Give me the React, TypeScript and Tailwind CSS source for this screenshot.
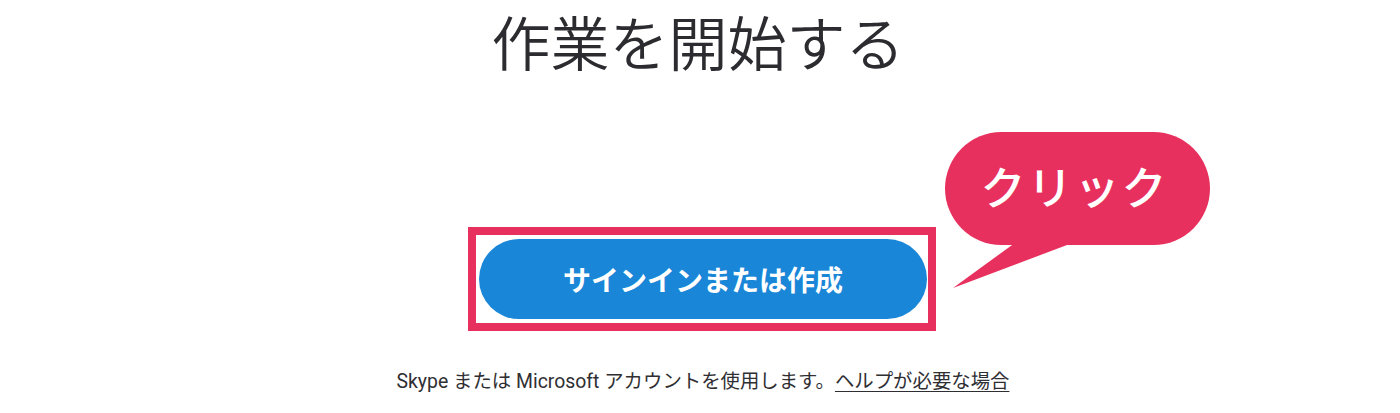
import React from "react";

export default function App() {
  return (
    <div className="w-[1400px] h-[413px] bg-white overflow-hidden flex flex-col items-center">
      <h1 className="mt-[6px] ml-[-4px] text-[59px] leading-[1.2] font-[350] text-[#2b2b30] font-['Noto_Sans_CJK_JP',sans-serif]">
        作業を開始する
      </h1>

      <div className="relative mt-[150px] ml-[4px]">
        <div className="w-[468px] h-[104px] border-[8px] border-[#e8305e] pl-[3px] pr-[1px] py-[4px] flex">
          <button className="w-[448px] h-[80px] rounded-full bg-[#1a86d7] text-white text-[28px] font-bold font-['Noto_Sans_CJK_JP',sans-serif] flex items-center justify-center">
            サインインまたは作成
          </button>
        </div>

        <div className="absolute left-[477px] top-[-95px] w-[266px] h-[158px]">
          <svg width="266" height="158" viewBox="0 0 266 158" className="absolute inset-0">
            <rect x="0" y="0" width="265" height="113" rx="56.5" fill="#e8305e" />
            <polygon points="78,105 130,105 122,113 8,156" fill="#e8305e" />
          </svg>
          <div className="relative h-[113px] w-[265px] flex items-center justify-center pb-[6px] pr-[6px] text-white text-[45px] font-medium leading-none font-['Noto_Sans_CJK_JP',sans-serif] tracking-[2px]">
            クリック
          </div>
        </div>
      </div>

      <p className="mt-[36px] ml-[6px] text-[19.4px] text-[#2f2f33] font-['Roboto','Noto_Sans_CJK_JP',sans-serif] leading-normal">
        Skype または Microsoft アカウントを使用します。
        <a className="underline underline-offset-[3px]">ヘルプが必要な場合</a>
      </p>
    </div>
  );
}
